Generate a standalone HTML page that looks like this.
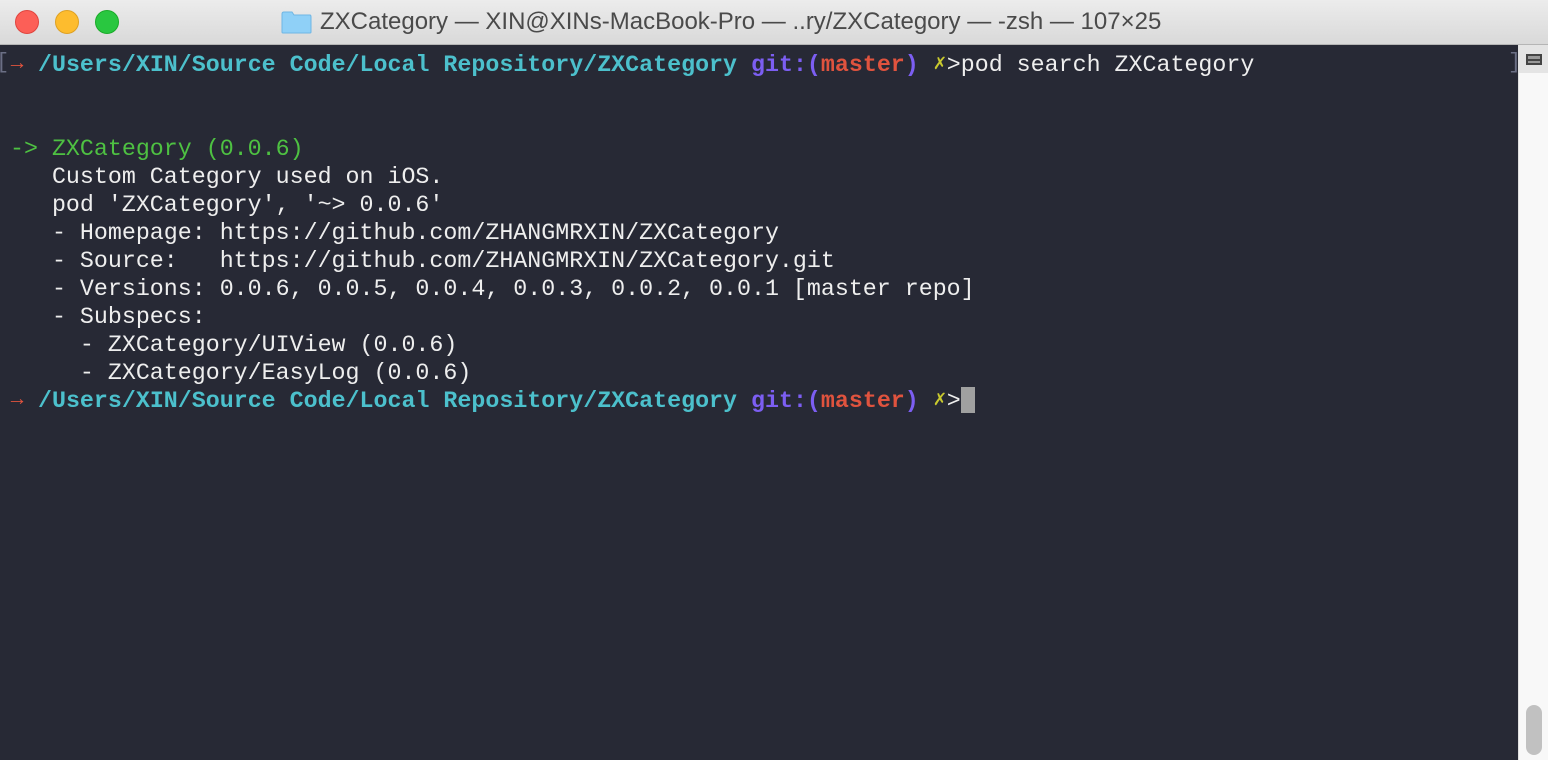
<!DOCTYPE html>
<html><head><meta charset="utf-8"><style>
html,body{margin:0;padding:0;width:1548px;height:760px;overflow:hidden;background:#272935}
.title{position:absolute;left:0;top:0;width:1548px;height:45px;background:linear-gradient(#ececec,#d9d9d9);border-bottom:1px solid #b5b5b5;box-sizing:border-box}
.dot{position:absolute;top:10px;width:24px;height:24px;border-radius:50%}
.ttl{position:absolute;left:320px;top:8px;font:24px "Liberation Sans",sans-serif;color:#4a4a4a;white-space:nowrap}
.folder{position:absolute;left:281px;top:11px;width:31px;height:23px}
.term{position:absolute;left:0;top:51px;width:1518px;height:709px;font-family:"Liberation Mono",monospace;font-size:23.3px;line-height:28px;color:#eeeeee}
.term div{height:28px;padding-left:10px;white-space:pre;overflow:hidden}
.b{font-weight:bold}
.c{color:#4cc0cc}.p{color:#7c5ef2}.r{color:#e0533e}.g{color:#4ec142}.y{color:#c9c92e}.gr{color:#6b6f85}
.w{display:inline-block;width:14px;text-align:center;overflow:hidden;vertical-align:top;font-size:21px}
.sb{position:absolute;left:1518px;top:45px;width:30px;height:715px;background:#f8f8f8;border-left:1px solid #e0e0e0;box-sizing:border-box}
</style></head><body>
<div class="title">
<div class="dot" style="left:15px;background:#fc5f57;border:1px solid #e0443e;box-sizing:border-box"></div>
<div class="dot" style="left:55px;background:#fdbc2e;border:1px solid #dea123;box-sizing:border-box"></div>
<div class="dot" style="left:95px;background:#29c740;border:1px solid #1aab29;box-sizing:border-box"></div>
<svg class="folder" viewBox="0 0 31 23"><path d="M1 3 Q1 1 3 1 L11 1 L13 4 L29 4 Q30 4 30 6 L30 21 Q30 22 29 22 L2 22 Q1 22 1 21Z" fill="#8fd0f7" stroke="#6fb6e4"/></svg>
<div class="ttl">ZXCategory — XIN@XINs-MacBook-Pro — ..ry/ZXCategory — -zsh — 107×25</div>
</div>
<div class="term"><div><span class="r b w">→</span> <span class="c b">/Users/XIN/Source Code/Local Repository/ZXCategory</span> <span class="p b">git:(</span><span class="r b">master</span><span class="p b">)</span> <span class="y w">✗</span>&gt;pod search ZXCategory</div><div></div><div></div><div><span class="g">-&gt; ZXCategory (0.0.6)</span></div><div>   Custom Category used on iOS.</div><div>   pod 'ZXCategory', '~&gt; 0.0.6'</div><div>   - Homepage: https://github.com/ZHANGMRXIN/ZXCategory</div><div>   - Source:   https://github.com/ZHANGMRXIN/ZXCategory.git</div><div>   - Versions: 0.0.6, 0.0.5, 0.0.4, 0.0.3, 0.0.2, 0.0.1 [master repo]</div><div>   - Subspecs:</div><div>     - ZXCategory/UIView (0.0.6)</div><div>     - ZXCategory/EasyLog (0.0.6)</div><div><span class="r b w">→</span> <span class="c b">/Users/XIN/Source Code/Local Repository/ZXCategory</span> <span class="p b">git:(</span><span class="r b">master</span><span class="p b">)</span> <span class="y w">✗</span>&gt;<span style="display:inline-block;width:14px;height:26px;vertical-align:top;background:#a0a0a0"></span></div></div>
<div style="position:absolute;left:-4px;top:50px;color:#6b6f85;font:22px 'Liberation Mono',monospace">[</div>
<div style="position:absolute;left:1508px;top:50px;color:#6b6f85;font:22px 'Liberation Mono',monospace">]</div>
<div class="sb">
<div style="position:absolute;left:0;top:0;width:29px;height:28px;background:#e4e4e4"></div>
<div style="position:absolute;left:7px;top:9px;width:16px;height:11px;background:#444"></div>
<div style="position:absolute;left:9px;top:11px;width:12px;height:3px;background:#999"></div>
<div style="position:absolute;left:9px;top:16px;width:12px;height:2px;background:#999"></div>
<div style="position:absolute;left:7px;top:660px;width:16px;height:50px;border-radius:8px;background:#c1c1c1"></div>
</div>
</body></html>
